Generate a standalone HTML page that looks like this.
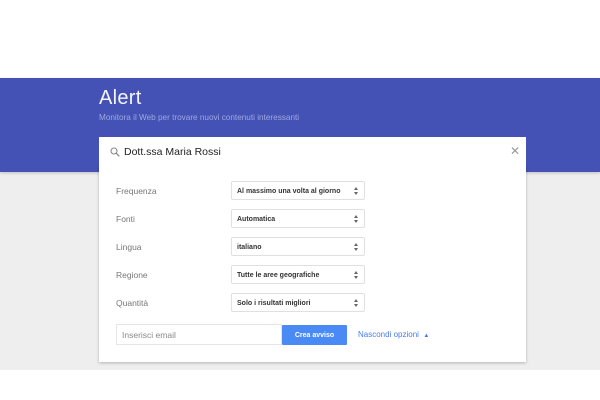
<!DOCTYPE html>
<html><head><style>
*{margin:0;padding:0;box-sizing:border-box}
body{width:600px;height:400px;background:#fff;font-family:"Liberation Sans",Arial,sans-serif;position:relative;overflow:hidden}
.grey{position:absolute;left:0;top:172px;width:600px;height:198px;background:#eeeeee}
.band{position:absolute;left:0;top:78px;width:600px;height:94px;background:#4552b5;box-shadow:0 1px 3px rgba(0,0,0,.2)}
.title{position:absolute;left:99px;top:87px;color:#f4f5ff;font-size:20px;font-weight:normal;letter-spacing:0.3px}
.sub{position:absolute;left:99px;top:113px;color:#9ea8e0;font-size:8.2px}
.search{position:absolute;left:99px;top:137px;width:427px;height:29px;background:#fff;z-index:3}
.search .t{position:absolute;left:25px;top:9px;font-size:10.5px;color:#222}
.search .x{position:absolute;right:6px;top:7px;font-size:12px;color:#999}
.card{position:absolute;left:99px;top:166px;width:427px;height:196px;background:#fff;box-shadow:0 1px 3px rgba(0,0,0,.25);z-index:2}
.lab{position:absolute;left:17px;font-size:8.5px;color:#777}
.sel{position:absolute;left:132px;width:134px;height:19px;border:1px solid #e0e0e0;border-radius:2px;font-size:7px;font-weight:bold;color:#333;padding:2px 0 0 5px;display:flex;align-items:center}
.sel:after{content:"";position:absolute;right:6px;top:5px;border-left:2.5px solid transparent;border-right:2.5px solid transparent;border-bottom:3px solid #666}
.sel:before{content:"";position:absolute;right:6px;top:10px;border-left:2.5px solid transparent;border-right:2.5px solid transparent;border-top:3px solid #666}
.email{position:absolute;left:17px;top:158px;width:166px;height:21px;border:1px solid #e6e6e6;font-size:8.5px;color:#888;padding-left:5px;display:flex;align-items:center}
.btn{position:absolute;left:183px;top:159px;width:65px;height:20px;background:#4a8af4;border-radius:1px;color:#fff;font-size:7px;font-weight:bold;display:flex;align-items:center;justify-content:center}
.link{position:absolute;left:259px;top:164px;color:#4a7bea;font-size:8px}
</style></head><body>
<div class="grey"></div>
<div class="band"></div>
<div class="title">Alert</div>
<div class="sub">Monitora il Web per trovare nuovi contenuti interessanti</div>
<div class="search">
<svg style="position:absolute;left:11px;top:10px" width="10" height="10" viewBox="0 0 10 10"><circle cx="4" cy="4" r="3" fill="none" stroke="#888" stroke-width="1.1"/><line x1="6.2" y1="6.2" x2="9.3" y2="9.3" stroke="#888" stroke-width="1.3"/></svg>
<div class="t">Dott.ssa Maria Rossi</div><div class="x">✕</div></div>
<div class="card">
<div class="lab" style="top:20px">Frequenza</div><div class="sel" style="top:15px">Al massimo una volta al giorno</div>
<div class="lab" style="top:48px">Fonti</div><div class="sel" style="top:43px">Automatica</div>
<div class="lab" style="top:76px">Lingua</div><div class="sel" style="top:71px">italiano</div>
<div class="lab" style="top:104px">Regione</div><div class="sel" style="top:99px">Tutte le aree geografiche</div>
<div class="lab" style="top:132px">Quantità</div><div class="sel" style="top:127px">Solo i risultati migliori</div>
<div class="email">Inserisci email</div>
<div class="btn">Crea avviso</div>
<div class="link">Nascondi opzioni &nbsp;<span style="font-size:6px">▲</span></div>
</div>
</body></html>
